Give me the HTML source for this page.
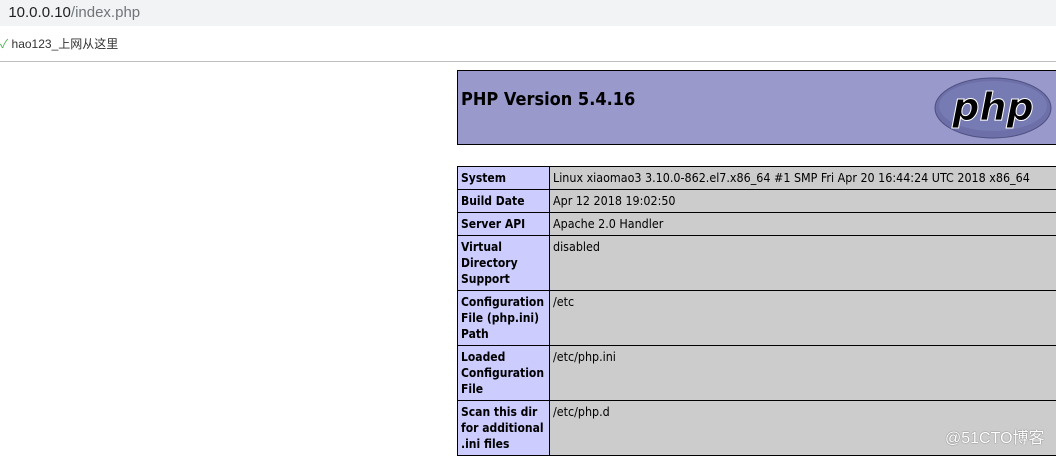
<!DOCTYPE html>
<html><head><meta charset="utf-8"><style>
body{margin:0;width:1056px;height:451px;overflow:hidden;background:#fff;font-family:"Liberation Sans","Noto Sans CJK SC",sans-serif;position:relative}
.top{position:absolute;left:0;top:0;width:1056px;height:26px;background:#f1f3f4;font-size:15px;line-height:26px;color:#202124}
.top span{color:#70757a}
.bm{position:absolute;left:0;top:26px;width:1056px;height:35px;border-bottom:1px solid #bdbdbd;font-size:12px;line-height:36px;color:#333}
.hdr{position:absolute;left:457px;top:70px;width:610px;height:73px;background:#9999cc;border:1px solid #000}
.hdr h1{margin:0;position:absolute;left:3px;top:18px;font-size:18px;font-weight:bold;font-family:"DejaVu Sans",sans-serif;font-stretch:condensed}
table{position:absolute;left:457px;top:166px;border-collapse:collapse;table-layout:fixed;width:620px;font-family:"DejaVu Sans",sans-serif;font-stretch:condensed;font-size:12px}
td{border:1px solid #000;vertical-align:top;padding:3px 2px 2px 3px;line-height:16px;overflow:hidden}
td.e{background:#ccccff;font-weight:bold;width:86px}
td.v{background:#cccccc;white-space:nowrap;font-size:12.4px}
.wm{position:absolute;left:945px;top:424px;font-size:16px;color:#fff;text-shadow:0 0 1px #777,0 0 1px #777}
</style></head><body>
<div class="top">&nbsp;&nbsp;10.0.0.10<span>/index.php</span></div>
<div class="bm"><span style="color:#4caf50">✓</span> hao123_上网从这里</div>
<div class="hdr"><h1>PHP Version 5.4.16</h1>
<svg style="position:absolute;left:475px;top:5px" width="120" height="64" viewBox="0 0 120 64"><ellipse cx="60" cy="32" rx="58" ry="30" fill="#6c6fa8" stroke="#4e5080" stroke-width="1"/><ellipse cx="60" cy="30" rx="54" ry="25" fill="#777bb3"/><text x="60" y="44" text-anchor="middle" font-family="DejaVu Sans" font-style="italic" font-weight="bold" font-size="38" fill="#000" stroke="#fff" stroke-width="1">php</text></svg></div>
<table>
<colgroup><col style="width:92px"><col></colgroup>
<tr style="height:23px"><td class="e">System</td><td class="v">Linux xiaomao3 3.10.0-862.el7.x86_64 #1 SMP Fri Apr 20 16:44:24 UTC 2018 x86_64</td></tr>
<tr style="height:23px"><td class="e">Build Date</td><td class="v">Apr 12 2018 19:02:50</td></tr>
<tr style="height:23px"><td class="e">Server API</td><td class="v">Apache 2.0 Handler</td></tr>
<tr style="height:55px"><td class="e">Virtual Directory Support</td><td class="v">disabled</td></tr>
<tr style="height:55px"><td class="e">Configuration File (php.ini) Path</td><td class="v">/etc</td></tr>
<tr style="height:55px"><td class="e">Loaded Configuration File</td><td class="v">/etc/php.ini</td></tr>
<tr style="height:55px"><td class="e">Scan this dir for additional .ini files</td><td class="v">/etc/php.d</td></tr>
</table>
<div class="wm">@51CTO博客</div>
</body></html>
